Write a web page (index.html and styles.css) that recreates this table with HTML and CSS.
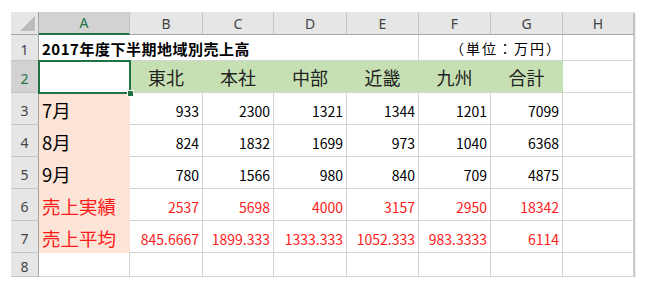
FILE: index.html
```html
<!DOCTYPE html>
<html lang="ja">
<head>
<meta charset="utf-8">
<title>2017年度下半期地域別売上高</title>
<link rel="stylesheet" href="styles.css">
</head>
<body>
<div class="sheet">
  <div class="corner"><span class="tri"></span></div>
  <div class="ch sel">A</div>
  <div class="ch">B</div>
  <div class="ch">C</div>
  <div class="ch">D</div>
  <div class="ch">E</div>
  <div class="ch">F</div>
  <div class="ch">G</div>
  <div class="ch">H</div>

  <div class="rh">1</div>
  <div class="c title span5">2017年度下半期地域別売上高</div>
  <div class="c unit span2">（単位：万円）</div>
  <div class="c"></div>

  <div class="rh rsel">2</div>
  <div class="c active"><span class="selbox"></span><span class="handle"></span></div>
  <div class="c hdr">東北</div>
  <div class="c hdr">本社</div>
  <div class="c hdr">中部</div>
  <div class="c hdr">近畿</div>
  <div class="c hdr">九州</div>
  <div class="c hdr">合計</div>
  <div class="c"></div>

  <div class="rh">3</div>
  <div class="c lab">7月</div>
  <div class="c num">933</div>
  <div class="c num">2300</div>
  <div class="c num">1321</div>
  <div class="c num">1344</div>
  <div class="c num">1201</div>
  <div class="c num">7099</div>
  <div class="c"></div>

  <div class="rh">4</div>
  <div class="c lab">8月</div>
  <div class="c num">824</div>
  <div class="c num">1832</div>
  <div class="c num">1699</div>
  <div class="c num">973</div>
  <div class="c num">1040</div>
  <div class="c num">6368</div>
  <div class="c"></div>

  <div class="rh">5</div>
  <div class="c lab">9月</div>
  <div class="c num">780</div>
  <div class="c num">1566</div>
  <div class="c num">980</div>
  <div class="c num">840</div>
  <div class="c num">709</div>
  <div class="c num">4875</div>
  <div class="c"></div>

  <div class="rh">6</div>
  <div class="c lab red">売上実績</div>
  <div class="c num red">2537</div>
  <div class="c num red">5698</div>
  <div class="c num red">4000</div>
  <div class="c num red">3157</div>
  <div class="c num red">2950</div>
  <div class="c num red">18342</div>
  <div class="c"></div>

  <div class="rh">7</div>
  <div class="c lab red">売上平均</div>
  <div class="c num red">845.6667</div>
  <div class="c num red">1899.333</div>
  <div class="c num red">1333.333</div>
  <div class="c num red">1052.333</div>
  <div class="c num red">983.3333</div>
  <div class="c num red">6114</div>
  <div class="c"></div>

  <div class="rh">8</div>
  <div class="c"></div>
  <div class="c"></div>
  <div class="c"></div>
  <div class="c"></div>
  <div class="c"></div>
  <div class="c"></div>
  <div class="c"></div>
  <div class="c"></div>
</div>
</body>
</html>
```

FILE: styles.css
```css
html, body {
  margin: 0;
  padding: 0;
  background: #ffffff;
}

.sheet {
  display: grid;
  grid-template-columns: 28px 91px 73px 71px 73px 72px 72px 72px 71px;
  grid-template-rows: 23px 26px repeat(6, 32px) 24px;
  width: 623px;
  margin: 12px 0 0 11px;
  box-shadow: 1px 1px 1px rgba(0, 0, 0, 0.25);
  font-family: "Noto Sans CJK JP", "Noto Sans", sans-serif;
  color: #000;
}

.sheet > div {
  box-sizing: border-box;
  min-width: 0;
}

.corner {
  position: relative;
  background: #e6e6e6;
  border-right: 1px solid #a6a6a6;
  border-bottom: 1px solid #a6a6a6;
}

.tri {
  position: absolute;
  right: 3px;
  bottom: 3px;
  width: 0;
  height: 0;
  border-left: 15px solid transparent;
  border-bottom: 15px solid #bcbcbc;
}

.ch {
  background: #e6e6e6;
  border-right: 1px solid #c4c4c4;
  border-bottom: 1px solid #a6a6a6;
  display: flex;
  align-items: center;
  justify-content: center;
  font-family: "Noto Sans", sans-serif;
  font-size: 14px;
  color: #444;
}

.ch.sel {
  background: #d2d2d2;
  color: #217346;
  border-bottom: 2px solid #217346;
}

.rh {
  background: #e6e6e6;
  border-right: 1px solid #a6a6a6;
  border-bottom: 1px solid #c4c4c4;
  display: flex;
  align-items: center;
  justify-content: center;
  padding-top: 3px;
  font-family: "Noto Sans", sans-serif;
  font-size: 14px;
  color: #444;
}

.rh.rsel {
  background: #d2d2d2;
  color: #217346;
}

.c {
  border-right: 1px solid #d4d4d4;
  border-bottom: 1px solid #d4d4d4;
  display: flex;
  align-items: center;
  padding: 0 3px;
  white-space: nowrap;
  font-size: 14px;
}

.span5 {
  grid-column: span 5;
}

.span2 {
  grid-column: span 2;
}

.title {
  font-weight: bold;
  font-size: 15px;
  letter-spacing: 0.5px;
  padding-left: 3px;
  padding-top: 1px;
}

.unit {
  justify-content: flex-end;
  font-size: 14px;
  letter-spacing: 2px;
  padding-right: 0;
  padding-top: 1px;
}

.active {
  position: relative;
  background: #fff;
}

.selbox {
  position: absolute;
  left: -1px;
  top: -1px;
  right: -2px;
  bottom: -2px;
  border: 2px solid #217346;
}

.handle {
  position: absolute;
  right: -5px;
  bottom: -5px;
  width: 5px;
  height: 5px;
  background: #217346;
  border: 1px solid #fff;
  z-index: 2;
}

.hdr {
  background: #c6e0b4;
  border-right-color: #c6e0b4;
  justify-content: center;
  font-size: 18px;
  color: #222;
  padding-top: 1px;
}

.lab {
  background: #fce4d6;
  border-right-color: #fce4d6;
  border-bottom-color: #fce4d6;
  font-size: 18.5px;
  padding-left: 3px;
  padding-top: 2px;
}

.num {
  justify-content: flex-end;
  padding-right: 3px;
  padding-top: 4px;
}

.red {
  color: #ff1a1a;
}
```
